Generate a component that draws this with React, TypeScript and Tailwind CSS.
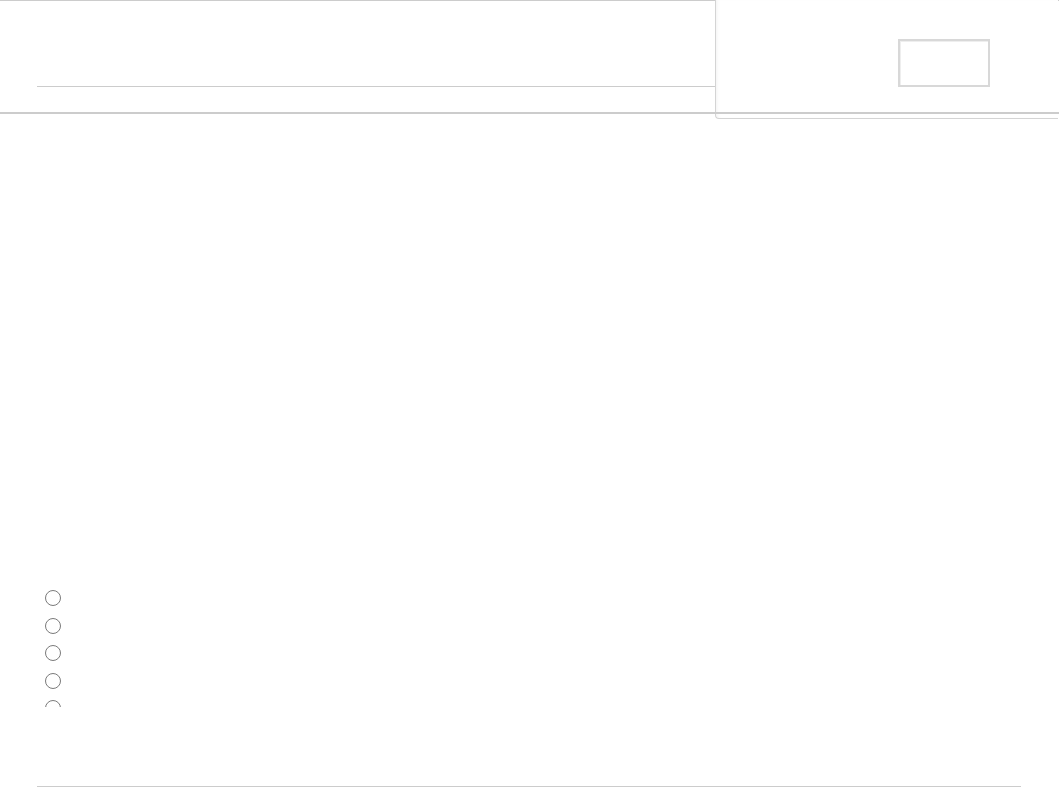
import React from "react";

// Simple blank survey-like page: header strip, side panel, radio list, footer rule
const options = ["a", "b", "c", "d", "e", "f"];

function RadioDot() {
  return <div className="w-4 h-4 rounded-full border-[1.5px] border-[#7a7a7a] bg-white shrink-0" />;
}

export default function App() {
  return (
    <div className="w-[1059px] h-[787px] bg-white overflow-hidden relative font-['Liberation_Sans',sans-serif]">
      {/* Header */}
      <div className="relative h-[114px] border-t border-[#cccccc]">
        {/* Side panel (sits under the header rule) */}
        <div className="absolute left-[715px] top-[-1px] w-[343px] h-[119px] bg-white border-l border-b border-[#d4d4d4] rounded-bl-[4px] shadow-[inset_3px_0_4px_-3px_rgba(0,0,0,0.08)] flex items-start">
          <div className="ml-[182px] mt-[39px] w-[92px] h-[48px] border-2 border-[#d8d8d8] bg-white shadow-[inset_1px_1px_0_#eeeeee]" />
        </div>
        <div className="relative flex flex-col h-full">
          <div className="h-[85px]" />
          <div className="ml-[37px] w-[678px] border-t border-[#cccccc]" />
          <div className="flex-1" />
          <div className="h-[2px] bg-[#cccccc]" />
        </div>
      </div>

      {/* Body */}
      <div className="h-[476px]" />

      <div className="h-[117px] overflow-hidden pl-[45px]">
        <div className="flex flex-col">
          {options.map((o) => (
            <div key={o} className="h-[27.5px] flex items-start">
              <RadioDot />
            </div>
          ))}
        </div>
      </div>

      <div className="h-[79px]" />
      <div className="ml-[37px] w-[984px] border-t border-[#cccccc]" />
    </div>
  );
}
